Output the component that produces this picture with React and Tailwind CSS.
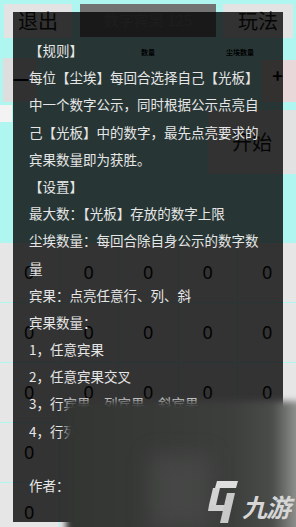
import React from "react";

const lines = [
  "【规则】",
  "每位【尘埃】每回合选择自己【光板】",
  "中一个数字公示，同时根据公示点亮自",
  "己【光板】中的数字，最先点亮要求的",
  "宾果数量即为获胜。",
  "【设置】",
  "最大数：【光板】存放的数字上限",
  "尘埃数量：每回合除自身公示的数字数",
  "量",
  "宾果：点亮任意行、列、斜",
  "宾果数量：",
  "1，任意宾果",
  "2，任意宾果交叉",
  "3，行宾果、列宾果、斜宾果",
  "4，行列斜宾果交叉",
  "",
  "作者：",
];

export default function App() {
  const cells = Array.from({ length: 25 });
  return (
    <div className="relative w-[296px] h-[527px] overflow-hidden bg-[#b0f6f0] font-['Noto_Sans_CJK_SC',sans-serif]">
      {/* game layer */}
      <div className="flex flex-col">
        <div className="flex items-start h-[44px] pt-[4px] pl-[4px] pr-[3px]">
          <div className="w-[68px] h-[34px] bg-[#e3e3e3] flex items-center justify-center text-[20px] text-[#1a1a1a]">退出</div>
          <div className="ml-[8px] w-[136px] h-[33px] bg-[#727272] flex items-center justify-center text-[15px] text-[#868686]">数字宾果 125</div>
          <div className="ml-auto w-[70px] h-[34px] bg-[#e3e3e3] flex items-center justify-center text-[20px] text-[#1a1a1a]">玩法</div>
        </div>
        <div className="relative h-[58px]">
          <div className="absolute left-[128px] top-[3px] w-[40px] text-center text-[7px] font-bold text-black">数量</div>
          <div className="absolute left-[215px] top-[3px] w-[50px] text-center text-[7px] font-bold text-black">尘埃数量</div>
          <div className="flex items-end h-full">
            <div className="ml-[3px] w-[34px] h-[44px] bg-[#dedede] flex items-start justify-center pt-[13px] pl-[2px] text-[16px] leading-[16px] font-bold text-black">一</div>
            <div className="ml-auto w-[34px] h-[42px] bg-[#e8d8da] flex items-start justify-center pt-[5px] pr-[3px] text-[18px] leading-[20px] font-bold text-black">+</div>
          </div>
        </div>
        <div className="flex h-[75px] items-start">
          <div className="mt-[3px] w-[12px] h-[17px] bg-[#f3f3f3]" />
          <div className="ml-auto mt-[8px] w-[88px] h-[64px] bg-[#e2e2e2] flex items-center justify-center text-[20px] text-[#1a1a1a]">开始</div>
        </div>
        <div className="h-[66px]" />
        <div className="grid grid-cols-[repeat(5,58.5px)] auto-rows-[59px] gap-[1px]">
          {cells.map((_, i) => (
            <div key={i} className="bg-[#e6e6e6] flex items-center justify-center text-[18px] text-[#111] font-['Noto_Sans',sans-serif]">0</div>
          ))}
        </div>
      </div>

      {/* dialog overlay */}
      <div className="absolute left-[13px] top-[12px] w-[270px] h-[510px] bg-black/[0.78] pt-[25px] pl-[16px] text-[13.5px] leading-[27.2px] text-[#e6e6e6]">
        {lines.map((t, i) => (
          <div key={i} className="whitespace-nowrap h-[27.2px]">{t}</div>
        ))}
      </div>

      {/* blurred patch */}
      <div className="absolute left-[66px] top-[401px] w-[240px] h-[135px] blur-[3px] bg-[linear-gradient(90deg,#333533_0%,#383a38_40%,#3d3f3d_70%,#4a4c4a_86%,#8e908e_96%,#9a9a9a_100%)]" />
      <div className="absolute left-[150px] top-[455px] w-[60px] h-[72px] blur-[10px] bg-[#4a4c4a]/70" />

      {/* logo */}
      <div className="absolute left-[208px] top-[481px] flex items-end">
        <svg width="30" height="42" viewBox="0 0 30 42">
          <polygon points="9,0 30,0 28,7 7,7" fill="#dedede" />
          <polygon points="5,7 12,7 8,24 1,24" fill="#d4d4d4" />
          <polygon points="1,24 20,24 18.5,30 0,30" fill="#cfcfcf" />
          <polygon points="19,12 27,12 20,42 12,42" fill="#c8c8c8" />
        </svg>
        <div className="ml-[4px] mb-[4px] text-[25px] leading-none italic font-bold text-[#d6d6d6] tracking-[-1px]">九游</div>
      </div>
    </div>
  );
}
